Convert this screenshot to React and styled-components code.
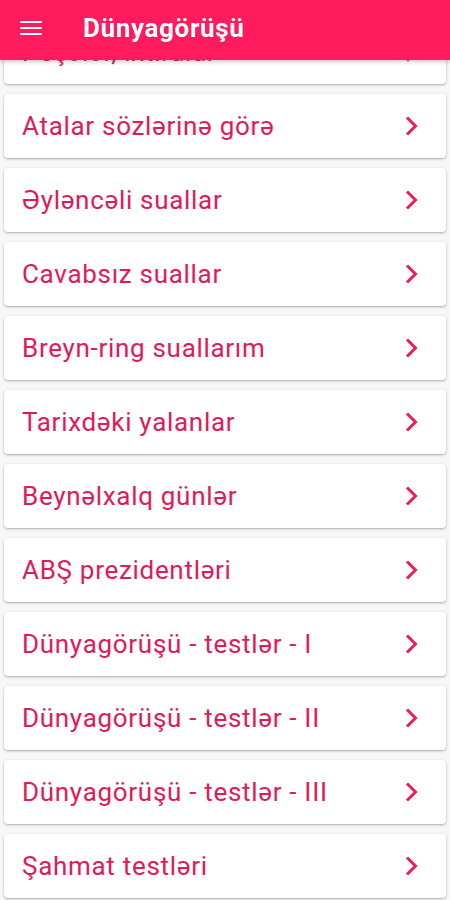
import React from "react";
import styled, { createGlobalStyle } from "styled-components";

const Global = createGlobalStyle`
  html, body { margin: 0; padding: 0; background: #f7f7f7; }
  body { font-family: Roboto, "Noto Sans", "Liberation Sans", sans-serif; }
  * { box-sizing: border-box; }
`;

const Page = styled.div`
  width: 450px;
  min-height: 900px;
  background: #f7f7f7;
  overflow: hidden;
`;

const AppBar = styled.header`
  position: fixed;
  top: 0;
  left: 0;
  right: 0;
  height: 60px;
  background: #ff1b5e;
  display: flex;
  align-items: center;
  padding-left: 20px;
  gap: 41px;
  z-index: 10;
  box-shadow: 0 2px 4px rgba(0, 0, 0, 0.22);
`;

const MenuButton = styled.div`
  width: 22px;
  height: 14px;
  display: flex;
  flex-direction: column;
  justify-content: space-between;
  margin-top: -4px;
`;

const MenuLine = styled.span`
  display: block;
  height: 2px;
  background: #fff;
  border-radius: 1px;
`;

const Title = styled.h1`
  margin: 0;
  color: #fff;
  font-size: 26px;
  font-weight: 700;
  letter-spacing: 0.65px;
  margin-top: -5px;
`;

const List = styled.div`
  display: flex;
  flex-direction: column;
  gap: 10px;
  padding: 20px 4px 10px;
`;

const Card = styled.div`
  height: 64px;
  background: #fff;
  border-radius: 4px;
  box-shadow: 0 1px 3px rgba(0, 0, 0, 0.25), 0 1px 1px rgba(0, 0, 0, 0.08);
  display: flex;
  align-items: center;
  justify-content: space-between;
  padding: 0 26px 0 18px;
`;

const Label = styled.span`
  color: #e01a5b;
  font-size: 26px;
  font-weight: 400;
  letter-spacing: 0.7px;
  white-space: nowrap;
`;

const Chevron = () => (
  <svg width="17" height="22" viewBox="0 0 17 22" fill="none">
    <path d="M4 2.5 L12.5 11 L4 19.5" stroke="#ec1c5f" strokeWidth="3" strokeLinecap="butt" strokeLinejoin="miter" />
  </svg>
);

const items = [
  "Peşələr, ixtiralar",
  "Atalar sözlərinə görə",
  "Əyləncəli suallar",
  "Cavabsız suallar",
  "Breyn-ring suallarım",
  "Tarixdəki yalanlar",
  "Beynəlxalq günlər",
  "ABŞ prezidentləri",
  "Dünyagörüşü - testlər - I",
  "Dünyagörüşü - testlər - II",
  "Dünyagörüşü - testlər - III",
  "Şahmat testləri",
];

export default function App() {
  return (
    <Page>
      <Global />
      <AppBar>
        <MenuButton>
          <MenuLine />
          <MenuLine />
          <MenuLine />
        </MenuButton>
        <Title>Dünyagörüşü</Title>
      </AppBar>
      <List>
        {items.map((t) => (
          <Card key={t}>
            <Label>{t}</Label>
            <Chevron />
          </Card>
        ))}
      </List>
    </Page>
  );
}
